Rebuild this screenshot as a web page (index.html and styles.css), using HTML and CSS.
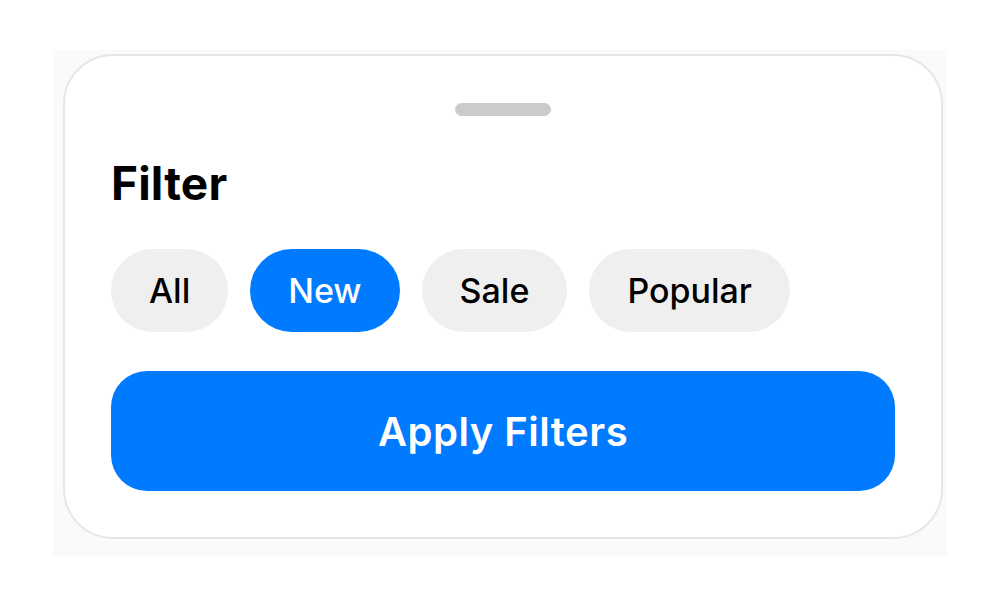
FILE: index.html
```html
<!DOCTYPE html>
<html lang="en">
<head>
<meta charset="utf-8">
<title>Filter</title>
<link rel="stylesheet" href="styles.css">
</head>
<body>
<div class="backdrop">
  <div class="sheet">
    <div class="handle"></div>
    <h2 class="title">Filter</h2>
    <div class="chips">
      <button class="chip">All</button>
      <button class="chip chip-active">New</button>
      <button class="chip">Sale</button>
      <button class="chip">Popular</button>
    </div>
    <button class="apply">Apply Filters</button>
  </div>
</div>
</body>
</html>
```
FILE: styles.css
```css
* { box-sizing: border-box; }
html, body {
  margin: 0;
  padding: 0;
  background: #ffffff;
  font-family: Inter, "Noto Sans", sans-serif;
}
body {
  width: 1000px;
  height: 610px;
  padding: 50px 53px 0 53px;
}
.backdrop {
  width: 894px;
  height: 506px;
  background: #fafafa;
  padding: 4px 10px 0 10px;
}
.sheet {
  width: 880px;
  height: 485px;
  background: #ffffff;
  border: 2px solid #e6e6e6;
  border-radius: 50px;
  padding: 47px 46px 46px 46px;
  display: flex;
  flex-direction: column;
}
.handle {
  width: 96px;
  height: 13px;
  border-radius: 7px;
  background: #cbcbcb;
  align-self: center;
  flex: none;
}
.title {
  margin: 41px 0 0 0;
  font-size: 46px;
  line-height: 52px;
  font-weight: 700;
  color: #000;
  letter-spacing: 0.2px;
}
.chips {
  display: flex;
  gap: 22px;
  margin-top: 40px;
}
.chip {
  height: 83px;
  padding: 0 38px;
  border: none;
  border-radius: 42px;
  background: #efefef;
  color: #000;
  font-family: inherit;
  font-size: 34px;
  font-weight: 500;
  line-height: 83px;
}
.chip-active {
  background: #007aff;
  color: #ffffff;
}
.apply {
  margin-top: 39px;
  height: 120px;
  width: 100%;
  border: none;
  border-radius: 36px;
  background: #007aff;
  color: #ffffff;
  font-family: inherit;
  font-size: 40px;
  font-weight: 600;
  letter-spacing: 0.5px;
}
```
